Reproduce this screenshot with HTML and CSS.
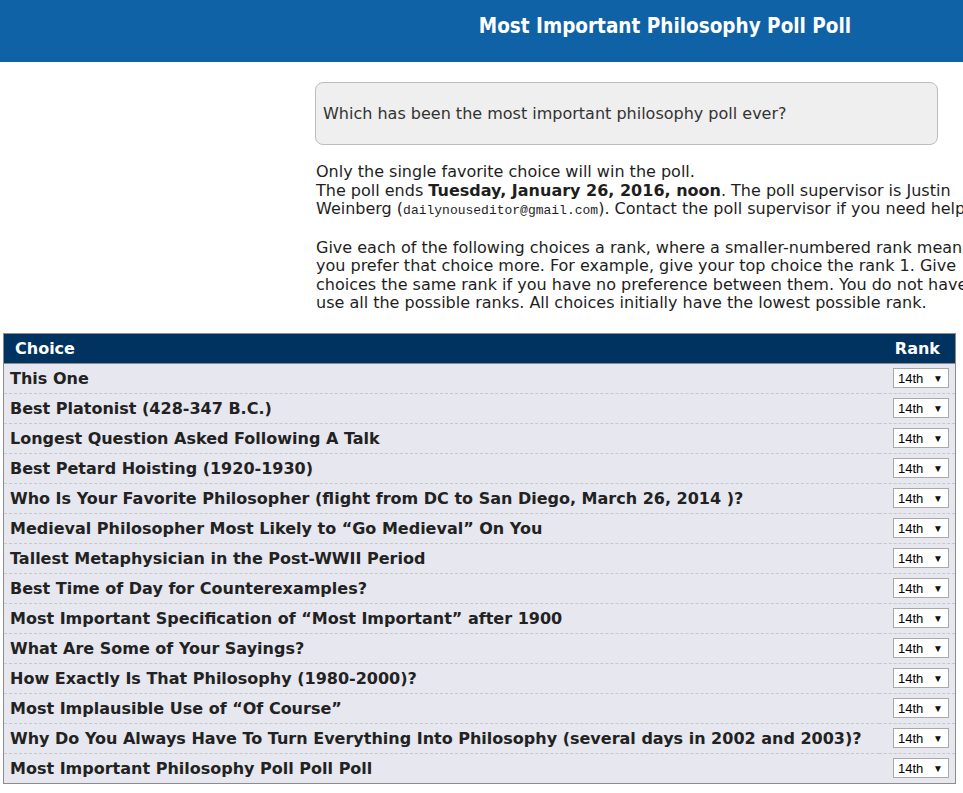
FILE: index.html
```html
<!DOCTYPE html>
<html>
<head>
<meta charset="utf-8">
<title>Most Important Philosophy Poll Poll</title>
<link rel="stylesheet" href="styles.css">
</head>
<body>
<header class="banner">
  <div class="banner-inner">
    <h1 class="title">Most Important Philosophy Poll Poll</h1>
  </div>
</header>
<main class="main">
  <section class="intro">
    <div class="question">Which has been the most important philosophy poll ever?</div>
    <p class="para">Only the single favorite choice will win the poll.<br>
    The poll ends <b>Tuesday, January 26, 2016, noon</b>. The poll supervisor is Justin<br>
    Weinberg (<tt class="mail">dailynouseditor@gmail.com</tt>). Contact the poll supervisor if you need help.</p>
    <p class="para">Give each of the following choices a rank, where a smaller-numbered rank means that<br>
    you prefer that choice more. For example, give your top choice the rank 1. Give<br>
    choices the same rank if you have no preference between them. You do not have to<br>
    use all the possible ranks. All choices initially have the lowest possible rank.</p>
  </section>
  <table class="ballot">
    <thead>
      <tr><th class="h-choice">Choice</th><th class="h-rank">Rank</th></tr>
    </thead>
    <tbody>
      <tr><td class="choice">This One</td><td class="rank"><span class="sel">14th<span class="arr">▼</span></span></td></tr>
      <tr><td class="choice">Best Platonist (428-347 B.C.)</td><td class="rank"><span class="sel">14th<span class="arr">▼</span></span></td></tr>
      <tr><td class="choice">Longest Question Asked Following A Talk</td><td class="rank"><span class="sel">14th<span class="arr">▼</span></span></td></tr>
      <tr><td class="choice">Best Petard Hoisting (1920-1930)</td><td class="rank"><span class="sel">14th<span class="arr">▼</span></span></td></tr>
      <tr><td class="choice">Who Is Your Favorite Philosopher (flight from DC to San Diego, March 26, 2014 )?</td><td class="rank"><span class="sel">14th<span class="arr">▼</span></span></td></tr>
      <tr><td class="choice">Medieval Philosopher Most Likely to “Go Medieval” On You</td><td class="rank"><span class="sel">14th<span class="arr">▼</span></span></td></tr>
      <tr><td class="choice">Tallest Metaphysician in the Post-WWII Period</td><td class="rank"><span class="sel">14th<span class="arr">▼</span></span></td></tr>
      <tr><td class="choice">Best Time of Day for Counterexamples?</td><td class="rank"><span class="sel">14th<span class="arr">▼</span></span></td></tr>
      <tr><td class="choice">Most Important Specification of “Most Important” after 1900</td><td class="rank"><span class="sel">14th<span class="arr">▼</span></span></td></tr>
      <tr><td class="choice">What Are Some of Your Sayings?</td><td class="rank"><span class="sel">14th<span class="arr">▼</span></span></td></tr>
      <tr><td class="choice">How Exactly Is That Philosophy (1980-2000)?</td><td class="rank"><span class="sel">14th<span class="arr">▼</span></span></td></tr>
      <tr><td class="choice">Most Implausible Use of “Of Course”</td><td class="rank"><span class="sel">14th<span class="arr">▼</span></span></td></tr>
      <tr><td class="choice">Why Do You Always Have To Turn Everything Into Philosophy (several days in 2002 and 2003)?</td><td class="rank"><span class="sel">14th<span class="arr">▼</span></span></td></tr>
      <tr><td class="choice">Most Important Philosophy Poll Poll Poll</td><td class="rank"><span class="sel">14th<span class="arr">▼</span></span></td></tr>
    </tbody>
  </table>
</main>
</body>
</html>
```

FILE: styles.css
```css
html, body {
  margin: 0;
  padding: 0;
  background: #ffffff;
  overflow: hidden;
}
body {
  font-family: "DejaVu Sans", sans-serif;
  color: #222222;
}
.banner {
  background: #0f62a6;
  height: 62px;
}
.banner-inner {
  margin-left: 315px;
  width: 700px;
  text-align: center;
}
.title {
  margin: 0;
  padding-top: 12px;
  font-family: "DejaVu Sans Condensed", sans-serif;
  font-weight: bold;
  font-size: 20.5px;
  line-height: 28px;
  color: #ffffff;
}
.main {
  padding-top: 20px;
}
.intro {
  margin-left: 315px;
  white-space: nowrap;
}
.question {
  width: 607px;
  height: 61px;
  box-sizing: content-box;
  padding: 0 7px;
  display: flex;
  align-items: center;
  background: #efefef;
  border: 1px solid #bdbdbd;
  border-radius: 8px;
  font-size: 16px;
  color: #333333;
}
.para {
  margin: 18px 0 0 1px;
  font-size: 16px;
  line-height: 18.5px;
  color: #1e1e1e;
}
.para + .para {
  margin-top: 18px;
}
.mail {
  font-family: "Liberation Mono", monospace;
  font-size: 13px;
}
.ballot {
  margin: 20px 0 0 3px;
  width: 953px;
  border-collapse: collapse;
  border: 1px solid #8c8c8c;
}
.ballot th {
  background: #00335f;
  color: #ffffff;
  font-family: "DejaVu Sans", sans-serif;
  font-weight: bold;
  font-size: 16px;
  height: 29px;
  padding: 0;
  border-bottom: 1px solid #8c8c8c;
}
.h-choice {
  text-align: left;
  padding-left: 11px !important;
}
.h-rank {
  text-align: right;
  padding-right: 15px !important;
}
.ballot td {
  background: #e7e7ef;
  height: 29px;
  padding: 0;
  border-top: 1px dashed #c8c8c8;
}
.ballot tbody tr:first-child td {
  border-top: none;
}
.choice {
  padding-left: 6px !important;
  font-family: "DejaVu Sans", sans-serif;
  font-weight: bold;
  font-size: 16px;
  color: #222222;
  white-space: nowrap;
}
.rank {
  width: 70px;
  text-align: right;
  padding-right: 6px !important;
}
.sel {
  display: inline-flex;
  align-items: center;
  justify-content: space-between;
  box-sizing: border-box;
  width: 56px;
  height: 20px;
  padding: 0 5px 0 4px;
  background: #ffffff;
  border: 1px solid #a9a9a9;
  font-family: "Liberation Sans", Arial, sans-serif;
  font-size: 13px;
  color: #000000;
  vertical-align: middle;
}
.arr {
  font-size: 10px;
  color: #111111;
}
```
